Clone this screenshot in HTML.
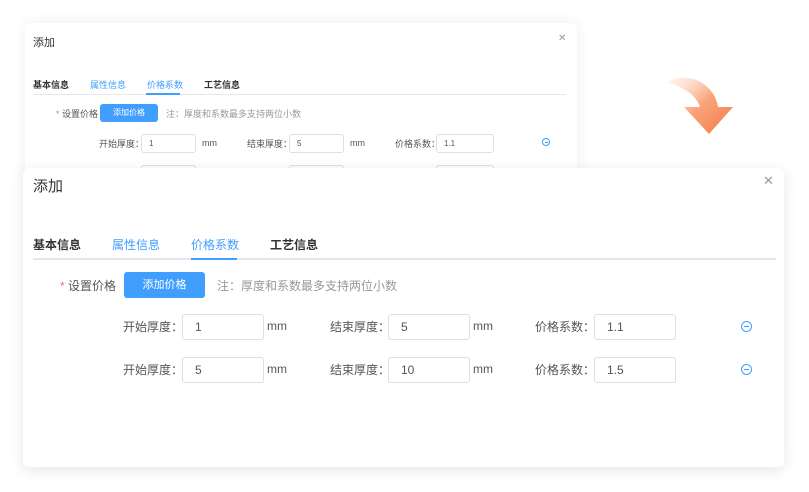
<!DOCTYPE html>
<html><head><meta charset="utf-8"><style>
*{margin:0;padding:0;box-sizing:border-box}
body{width:809px;height:492px;background:#fff;position:relative;overflow:hidden;font-family:"Liberation Sans","Noto Sans CJK SC",sans-serif;color:#333}
.a{position:absolute;white-space:nowrap}
.dlg{position:absolute;background:#fff;border-radius:6px}
.inp{position:absolute;border:1px solid #dcdfe6;border-radius:3px;background:#fff;color:#555}
.btn{position:absolute;background:#409eff;color:#fff;border-radius:3px;text-align:center}
.circ{position:absolute;border:1px solid #409eff;border-radius:50%}
.circ:after{content:"";position:absolute;left:25%;right:25%;top:50%;height:1px;margin-top:-.5px;background:#409eff}
</style></head><body>

<!-- back dialog -->
<div class="dlg" style="left:25px;top:23px;width:552px;height:160px;box-shadow:0 0 14px rgba(0,0,0,.07)"></div>
<div class="a" style="left:33px;top:34px;font-size:11px;color:#333">添加</div>
<div class="a" style="left:558px;top:33px;font-size:10px;color:#999">✕</div>
<div class="a" style="left:33px;top:78px;font-size:9px;font-weight:bold;color:#333">基本信息</div>
<div class="a" style="left:90px;top:78px;font-size:9px;color:#409eff">属性信息</div>
<div class="a" style="left:147px;top:78px;font-size:9px;color:#409eff">价格系数</div>
<div class="a" style="left:204px;top:78px;font-size:9px;font-weight:bold;color:#333">工艺信息</div>
<div class="a" style="left:33px;top:94px;width:533px;height:1px;background:#e4e7ed"></div>
<div class="a" style="left:146px;top:93px;width:34px;height:2px;background:#409eff"></div>
<div class="a" style="left:56px;top:107px;font-size:9px;color:#555"><span style="color:#f56c6c">*</span> 设置价格</div>
<div class="btn" style="left:100px;top:104px;width:58px;height:18px;font-size:8px;line-height:18px">添加价格</div>
<div class="a" style="left:166px;top:107px;font-size:9px;color:#999">注：厚度和系数最多支持两位小数</div>
<div class="a" style="left:99px;top:137px;font-size:9px;color:#555">开始厚度：</div>
<div class="inp" style="left:141px;top:134px;width:55px;height:19px;font-size:8px;padding:4px 7px">1</div>
<div class="a" style="left:202px;top:138px;font-size:9px;color:#555">mm</div>
<div class="a" style="left:247px;top:137px;font-size:9px;color:#555">结束厚度：</div>
<div class="inp" style="left:289px;top:134px;width:55px;height:19px;font-size:8px;padding:4px 7px">5</div>
<div class="a" style="left:350px;top:138px;font-size:9px;color:#555">mm</div>
<div class="a" style="left:395px;top:137px;font-size:9px;color:#555">价格系数：</div>
<div class="inp" style="left:436px;top:134px;width:58px;height:19px;font-size:8px;padding:4px 7px">1.1</div>
<div class="circ" style="left:542px;top:138px;width:8px;height:8px"></div>
<div class="inp" style="left:141px;top:165px;width:55px;height:19px"></div>
<div class="inp" style="left:289px;top:165px;width:55px;height:19px"></div>
<div class="inp" style="left:436px;top:165px;width:58px;height:19px"></div>

<!-- arrow -->
<svg class="a" style="left:650px;top:65px" width="100" height="80" viewBox="650 65 100 80">
<defs><linearGradient id="g" x1="0" y1="0" x2="1" y2="1"><stop offset="0" stop-color="#fde2d4" stop-opacity=".3"/><stop offset=".5" stop-color="#f9a47b"/><stop offset="1" stop-color="#f37a45"/></linearGradient></defs>
<path d="M667 82 C690 70 715 85 718 107 L733 107 L709 134 L684 107 L700 107 C696 95 685 88 667 82 Z" fill="url(#g)"/>
</svg>

<!-- front dialog -->
<div class="dlg" style="left:23px;top:168px;width:761px;height:299px;box-shadow:0 3px 14px rgba(0,0,0,.1)"></div>
<div class="a" style="left:33px;top:175px;font-size:15px;color:#333">添加</div>
<div class="a" style="left:763px;top:173px;font-size:13px;color:#999">✕</div>
<div class="a" style="left:33px;top:236px;font-size:12px;font-weight:bold;color:#333">基本信息</div>
<div class="a" style="left:112px;top:236px;font-size:12px;color:#409eff">属性信息</div>
<div class="a" style="left:191px;top:236px;font-size:12px;color:#409eff">价格系数</div>
<div class="a" style="left:270px;top:236px;font-size:12px;font-weight:bold;color:#333">工艺信息</div>
<div class="a" style="left:33px;top:258px;width:743px;height:2px;background:#e4e7ed"></div>
<div class="a" style="left:191px;top:258px;width:46px;height:2px;background:#409eff"></div>
<div class="a" style="left:60px;top:277px;font-size:12px;color:#555"><span style="color:#f56c6c">*</span> 设置价格</div>
<div class="btn" style="left:124px;top:272px;width:81px;height:26px;font-size:11px;line-height:26px">添加价格</div>
<div class="a" style="left:217px;top:277px;font-size:12px;color:#999">注：厚度和系数最多支持两位小数</div>

<div class="a" style="left:123px;top:318px;font-size:12px;color:#555">开始厚度：</div>
<div class="inp" style="left:182px;top:314px;width:82px;height:26px;font-size:12px;padding:5px 12px">1</div>
<div class="a" style="left:267px;top:319px;font-size:12px;color:#555">mm</div>
<div class="a" style="left:330px;top:318px;font-size:12px;color:#555">结束厚度：</div>
<div class="inp" style="left:388px;top:314px;width:82px;height:26px;font-size:12px;padding:5px 12px">5</div>
<div class="a" style="left:473px;top:319px;font-size:12px;color:#555">mm</div>
<div class="a" style="left:535px;top:318px;font-size:12px;color:#555">价格系数：</div>
<div class="inp" style="left:594px;top:314px;width:82px;height:26px;font-size:12px;padding:5px 12px">1.1</div>
<div class="circ" style="left:741px;top:321px;width:11px;height:11px"></div>

<div class="a" style="left:123px;top:361px;font-size:12px;color:#555">开始厚度：</div>
<div class="inp" style="left:182px;top:357px;width:82px;height:26px;font-size:12px;padding:5px 12px">5</div>
<div class="a" style="left:267px;top:362px;font-size:12px;color:#555">mm</div>
<div class="a" style="left:330px;top:361px;font-size:12px;color:#555">结束厚度：</div>
<div class="inp" style="left:388px;top:357px;width:82px;height:26px;font-size:12px;padding:5px 12px">10</div>
<div class="a" style="left:473px;top:362px;font-size:12px;color:#555">mm</div>
<div class="a" style="left:535px;top:361px;font-size:12px;color:#555">价格系数：</div>
<div class="inp" style="left:594px;top:357px;width:82px;height:26px;font-size:12px;padding:5px 12px">1.5</div>
<div class="circ" style="left:741px;top:364px;width:11px;height:11px"></div>
</body></html>
